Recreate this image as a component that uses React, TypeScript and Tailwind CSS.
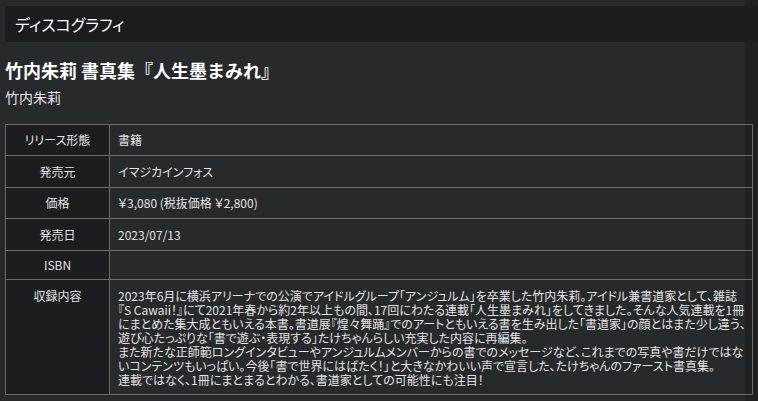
const rows = [
  { label: "リリース形態", value: "書籍", h: "h-[30px]" },
  { label: "発売元", value: "イマジカインフォス", h: "h-[32px]" },
  { label: "価格", value: "￥3,080 (税抜価格 ￥2,800)", h: "h-[31px]" },
  { label: "発売日", value: "2023/07/13", h: "h-[32px]" },
  { label: "ISBN", value: "", h: "h-[29px]" },
];

const contents = [
  "2023年6月に横浜アリーナでの公演でアイドルグループ「アンジュルム」を卒業した竹内朱莉。アイドル兼書道家として、雑誌",
  "『S Cawaii！』にて2021年春から約2年以上もの間、17回にわたる連載「人生墨まみれ」をしてきました。そんな人気連載を1冊",
  "にまとめた集大成ともいえる本書。書道展『煌々舞踊』でのアートともいえる書を生み出した「書道家」の顔とはまた少し違う、",
  "遊び心たっぷりな「書で遊ぶ・表現する」たけちゃんらしい充実した内容に再編集。",
  "また新たな正師範ロングインタビューやアンジュルムメンバーからの書でのメッセージなど、これまでの写真や書だけではな",
  "いコンテンツもいっぱい。今後「書で世界にはばたく！」と大きなかわいい声で宣言した、たけちゃんのファースト書真集。",
  "連載ではなく、1冊にまとまるとわかる、書道家としての可能性にも注目！",
];

export default function App() {
  return (
    <div className="w-[758px] h-[401px] overflow-hidden bg-[#1e2021] font-['Noto_Sans_CJK_JP',sans-serif] [font-feature-settings:'palt']">
      <div className="w-[745px] h-full bg-[#272a2b] pt-[6px]">
        {/* section header */}
        <div className="ml-[5px] w-[753px] h-[36px] bg-[#1b1c1e] flex items-center pl-[10px]">
          <h2 className="text-[16px] text-white leading-none">ディスコグラフィ</h2>
        </div>

        <div className="pl-[5px]">
          <h3 className="mt-[16px] text-[18px] leading-[24px] font-bold text-white [font-feature-settings:normal]">
            竹内朱莉 書真集『人生墨まみれ』
          </h3>
          <p className="mt-[5px] text-[14px] leading-[20px] text-[#e6e6e6]">竹内朱莉</p>

          <div className="mt-[17px] w-[748px] border border-[#6d6d65] text-[12px] text-[#e4e4e4]">
            {rows.map((r, i) => (
              <div key={r.label} className={`flex ${r.h} ${i > 0 ? "border-t border-[#6d6d65]" : ""}`}>
                <div className="w-[104px] shrink-0 bg-[#1c1d1f] border-r border-[#6d6d65] flex items-center justify-center">
                  {r.label}
                </div>
                <div className="flex-1 flex items-center pl-[8px]">{r.value}</div>
              </div>
            ))}
            <div className="flex h-[115px] border-t border-[#6d6d65]">
              <div className="w-[104px] shrink-0 bg-[#1c1d1f] border-r border-[#6d6d65] pt-[9px] text-center leading-[14px]">
                収録内容
              </div>
              <div className="flex-1 pl-[8px] pt-[9px] leading-[14px] whitespace-nowrap">
                {contents.map((line) => (
                  <div key={line}>{line}</div>
                ))}
              </div>
            </div>
          </div>
        </div>
      </div>
    </div>
  );
}
